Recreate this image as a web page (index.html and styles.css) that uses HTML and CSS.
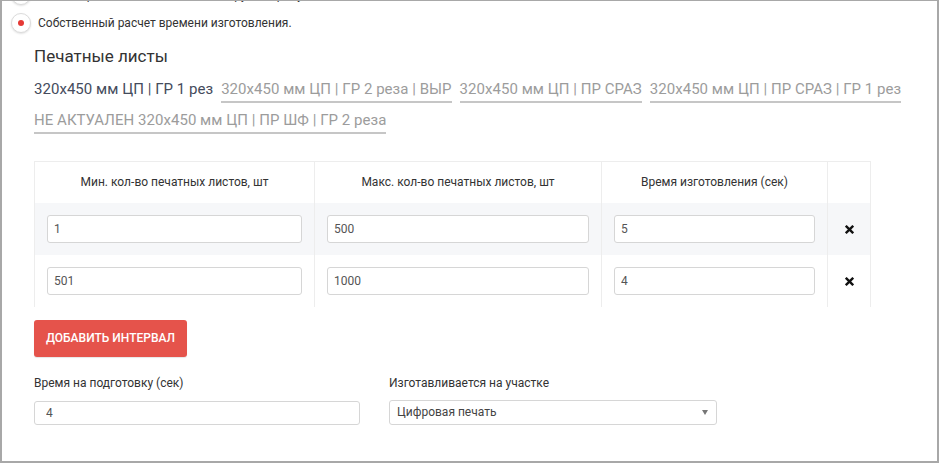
FILE: index.html
```html
<!DOCTYPE html>
<html lang="ru">
<head>
<meta charset="utf-8">
<title>Печатные листы</title>
<link rel="stylesheet" href="styles.css">
</head>
<body>
<div class="frame">
  <div class="radios">
    <label class="radio-row">
      <span class="radio"></span>
      <span class="radio-text">Расчет времени изготовления по группе продукции</span>
    </label>
    <label class="radio-row">
      <span class="radio checked"><span class="dot"></span></span>
      <span class="radio-text">Собственный расчет времени изготовления.</span>
    </label>
  </div>

  <div class="content">
    <h3 class="title">Печатные листы</h3>

    <div class="tabs">
      <span class="tab active">320x450 мм ЦП | ГР 1 рез</span>
      <span class="tab">320x450 мм ЦП | ГР 2 реза | ВЫР</span>
      <span class="tab">320x450 мм ЦП | ПР СРАЗ</span>
      <span class="tab">320x450 мм ЦП | ПР СРАЗ | ГР 1 рез</span>
      <span class="tab">НЕ АКТУАЛЕН 320x450 мм ЦП | ПР ШФ | ГР 2 реза</span>
    </div>

    <table class="grid">
      <colgroup>
        <col class="c1"><col class="c2"><col class="c3"><col class="c4">
      </colgroup>
      <thead>
        <tr>
          <th>Мин. кол-во печатных листов, шт</th>
          <th>Макс. кол-во печатных листов, шт</th>
          <th>Время изготовления (сек)</th>
          <th></th>
        </tr>
      </thead>
      <tbody>
        <tr class="odd">
          <td><input class="cell-input" type="text" value="1"></td>
          <td><input class="cell-input" type="text" value="500"></td>
          <td><input class="cell-input" type="text" value="5"></td>
          <td class="del"><svg class="x" viewBox="0 0 10 10" width="10" height="10"><path d="M1.8 1.8 L8.2 8.2 M8.2 1.8 L1.8 8.2" stroke="#111" stroke-width="2.6" stroke-linecap="square"/></svg></td>
        </tr>
        <tr>
          <td><input class="cell-input" type="text" value="501"></td>
          <td><input class="cell-input" type="text" value="1000"></td>
          <td><input class="cell-input" type="text" value="4"></td>
          <td class="del"><svg class="x" viewBox="0 0 10 10" width="10" height="10"><path d="M1.8 1.8 L8.2 8.2 M8.2 1.8 L1.8 8.2" stroke="#111" stroke-width="2.6" stroke-linecap="square"/></svg></td>
        </tr>
      </tbody>
    </table>

    <button class="btn-add" type="button">Добавить интервал</button>

    <div class="form-row">
      <div class="field">
        <label class="field-label">Время на подготовку (сек)</label>
        <input class="field-input prep" type="text" value="4">
      </div>
      <div class="field">
        <label class="field-label">Изготавливается на участке</label>
        <div class="select">
          <span>Цифровая печать</span>
          <span class="caret"></span>
        </div>
      </div>
    </div>
  </div>
</div>
</body>
</html>
```

FILE: styles.css
```css
* { box-sizing: border-box; }
html, body { margin: 0; padding: 0; background: #fff; }
body {
  font-family: Roboto, "Noto Sans", "Liberation Sans", sans-serif;
  color: #333;
}
.frame {
  width: 939px;
  height: 463px;
  border: 2px solid #a8a8a8;
  border-top-width: 1px;
  overflow: hidden;
  background: #fff;
}
.radios {
  margin-top: -20px;
  padding-left: 9px;
}
.radio-row {
  display: flex;
  align-items: center;
  height: 28px;
}
.radio {
  width: 20px;
  height: 20px;
  border-radius: 50%;
  border: 1px solid #dcdcdc;
  box-shadow: 0 1px 2px rgba(0,0,0,0.12);
  background: #fff;
  display: flex;
  align-items: center;
  justify-content: center;
  margin-right: 7px;
  flex: none;
}
.dot {
  width: 6px;
  height: 6px;
  border-radius: 50%;
  background: #e53935;
}
.radio-text {
  font-size: 12px;
  color: #333;
}
.content {
  padding-left: 32px;
}
.title {
  margin: 7px 0 0;
  font-size: 17px;
  font-weight: 400;
  line-height: 24px;
  color: #333;
}
.tabs {
  display: flex;
  flex-wrap: wrap;
  column-gap: 8px;
  row-gap: 7px;
  margin-top: 11px;
  width: 880px;
}
.tab {
  font-size: 15px;
  line-height: 20px;
  letter-spacing: 0.04px;
  padding-bottom: 2px;
  border-bottom: 2px solid #c6c6c6;
  color: #9c9c9c;
  white-space: nowrap;
}
.tab.active {
  color: #444b5c;
  border-bottom-color: transparent;
}
.grid {
  margin-top: 27px;
  border-collapse: collapse;
  table-layout: fixed;
  width: 836px;
}
.c1 { width: 280px; }
.c2 { width: 287px; }
.c3 { width: 226px; }
.c4 { width: 43px; }
.grid th {
  height: 41px;
  font-size: 12px;
  font-weight: 400;
  color: #333;
  text-align: center;
  border: 1px solid #ededed;
  border-bottom: none;
  padding: 0;
}
.grid td {
  height: 52px;
  padding: 0 12px;
  border-left: 1px solid #ededed;
  border-right: 1px solid #ededed;
  vertical-align: middle;
}
.grid tr.odd td { background: #f6f7f9; }
.cell-input {
  display: block;
  width: 100%;
  height: 28px;
  border: 1px solid #d6d6d6;
  border-radius: 3px;
  padding: 0 6px;
  font-family: inherit;
  font-size: 12px;
  color: #555;
  background: #fff;
  outline: none;
}
.grid td.del {
  text-align: center;
  padding: 0;
}
.x { display: inline-block; vertical-align: middle; width: 9px; height: 9px; }
.btn-add {
  display: block;
  margin-top: 13px;
  height: 37px;
  width: 153px;
  padding: 0;
  border: none;
  border-radius: 3px;
  background: #e5534b;
  color: #fff;
  font-family: inherit;
  font-size: 12px;
  font-weight: 500;
  text-transform: uppercase;
  box-shadow: 0 1px 1px rgba(0,0,0,0.1);
}
.form-row {
  display: grid;
  grid-template-columns: 326px 328px;
  column-gap: 29px;
  margin-top: 18px;
}
.field-label {
  display: block;
  font-size: 12px;
  line-height: 17px;
  color: #333;
}
.field-input {
  display: block;
  margin-top: 9px;
  width: 100%;
  height: 24px;
  border: 1px solid #d6d6d6;
  border-radius: 3px;
  padding: 0 11px;
  font-family: inherit;
  font-size: 12px;
  color: #555;
  outline: none;
}
.select {
  margin-top: 8px;
  height: 25px;
  border: 1px solid #d6d6d6;
  border-radius: 3px;
  padding: 0 8px 0 7px;
  display: flex;
  align-items: center;
  justify-content: space-between;
  font-size: 12px;
  color: #444;
}
.caret {
  width: 0;
  height: 0;
  border-left: 3.5px solid transparent;
  border-right: 3.5px solid transparent;
  border-top: 5px solid #777;
}
```
